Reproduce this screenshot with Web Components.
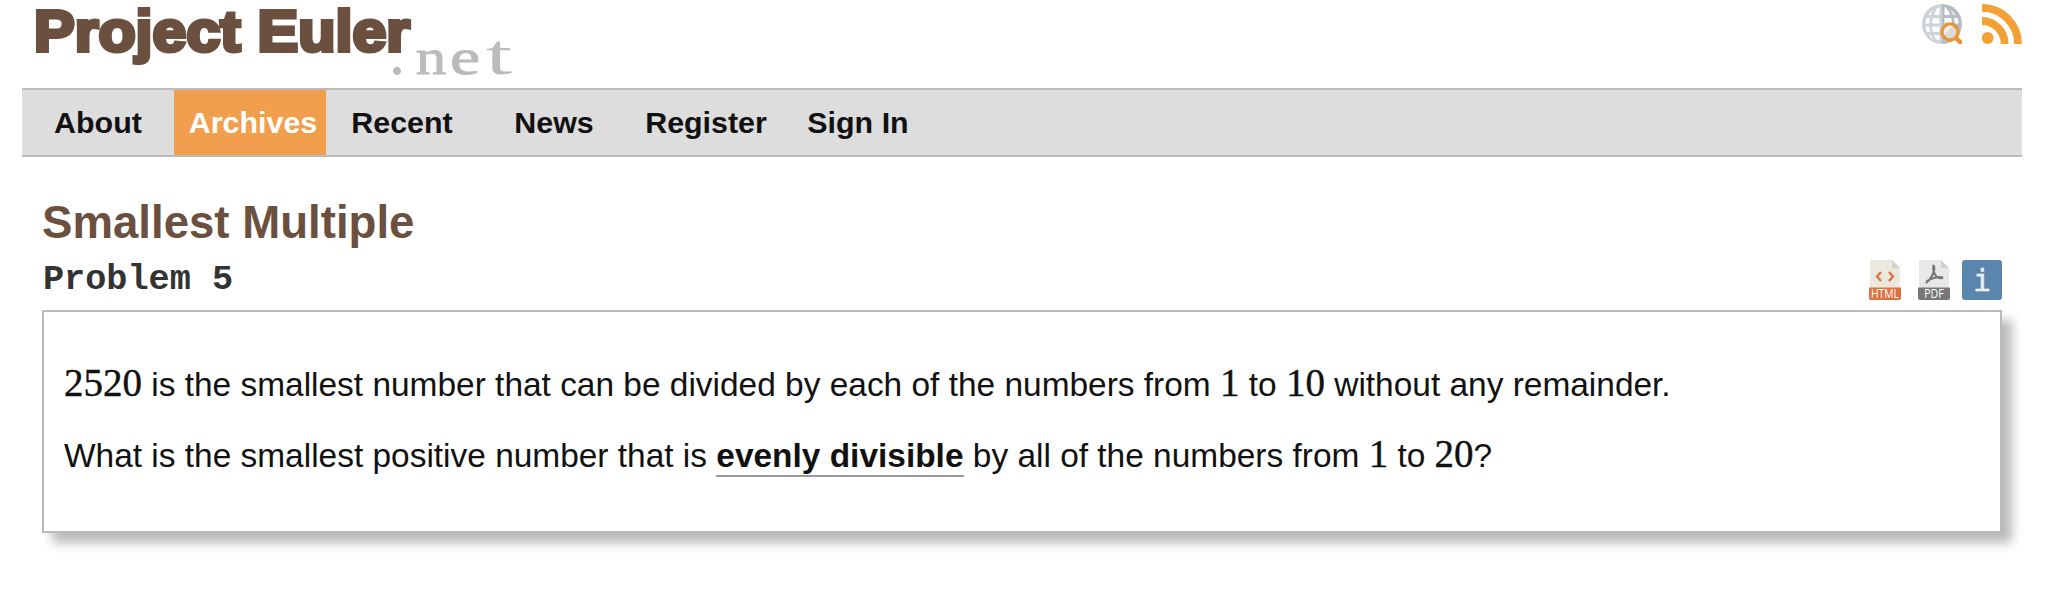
<!DOCTYPE html>
<html lang="en">
<head>
<meta charset="utf-8">
<title>Smallest Multiple - Project Euler</title>
<style>
  body { margin: 0; background: #fff; color: #111; font-family: "Liberation Sans", Arial, sans-serif; }
</style>
</head>
<body>
<euler-page>
  <euler-header slot="header"></euler-header>
  <euler-nav slot="nav">
    <nav-item>About</nav-item>
    <nav-item active>Archives</nav-item>
    <nav-item>Recent</nav-item>
    <nav-item>News</nav-item>
    <nav-item>Register</nav-item>
    <nav-item>Sign In</nav-item>
  </euler-nav>
  <problem-heading>
    <span slot="title">Smallest Multiple</span>
    <span slot="number">Problem 5</span>
  </problem-heading>
  <problem-content>
    <problem-line><math-num>2520</math-num> is the smallest number that can be divided by each of the numbers from <math-num>1</math-num> to <math-num>10</math-num> without any remainder.</problem-line>
    <problem-line>What is the smallest positive number that is <tip-term>evenly divisible</tip-term> by all of the numbers from <math-num>1</math-num> to <math-num>20</math-num>?</problem-line>
  </problem-content>
</euler-page>
<script>
const define = (name, html) => customElements.define(name, class extends HTMLElement {
  constructor() {
    super();
    const t = document.createElement('template');
    t.innerHTML = html;
    this.attachShadow({ mode: 'open' }).append(t.content.cloneNode(true));
  }
});

define('euler-page', `
  <style>
    :host { display: block; box-sizing: border-box; width: 2072px; height: 614px; overflow: hidden; padding: 0 50px 0 22px; }
    main { padding: 0 20px; }
  </style>
  <slot name="header"></slot><slot name="nav"></slot><main><slot></slot></main>`);

define('euler-header', `
  <style>
    :host { display: flex; justify-content: space-between; height: 88px; }
    site-logo { margin-left: 12px; }
    .icons { display: flex; gap: 20px; padding-top: 4px; }
  </style>
  <site-logo></site-logo>
  <div class="icons"><globe-icon></globe-icon><rss-icon></rss-icon></div>`);

define('site-logo', `
  <style>
    :host { display: flex; white-space: nowrap; }
    .name { font-weight: 700; font-size: 58px; line-height: 62px; color: #6b4f3f; -webkit-text-stroke: 4px #6b4f3f; width: 381px; transform: scaleX(1.051); transform-origin: left; }
    .net { display: flex; font-family: "Liberation Serif", serif; font-size: 50px; line-height: 56px; padding-top: 29px; margin-left: -35px; color: #bbb; -webkit-text-stroke: .8px #bbb; }
    .net span { width: 34px; text-align: center; transform: scaleX(1.22); }
    .net span:first-child { transform: scale(1.2); transform-origin: 50% 78%; }
    .net span:nth-child(3) { transform: scaleX(1.36); }
    .net span:last-child { -webkit-text-stroke-width: 0; transform: scale(1.9, 1.12); transform-origin: 50% 78%; }
  </style>
  <div class="name">Project Euler</div><div class="net"><span>.</span><span>n</span><span>e</span><span>t</span></div>`);

define('globe-icon', `
  <style>:host { display: block; width: 40px; height: 40px; } svg { display: block; }</style>
  <svg width="40" height="40" viewBox="0 0 40 40" fill="none">
    <defs><linearGradient id="g"><stop offset=".5" stop-color="#ccd3d6"/><stop offset=".5" stop-color="#b4bec2"/></linearGradient></defs>
    <circle cx="20" cy="20" r="20" fill="url(#g)"/>
    <g fill="#fff">
      <path d="M17.500 3v8h-5.500c1-4 3-7 5.500-8M22.500 3v8H28c-1-4-3-7-5.500-8M11 14h6.500v5.500h-7.500q0-3 1-5.500M22.500 14H29q1 2 1 5.500h-7.500zM10 22.500h7.500v5.500h-6.500q-1-2-1-5.500M22.500 22.500H29V28h-6.500zM12 31h5.500v5.500c-3 0-5-3-5.500-5.500M22.500 31H28c-1 3-3 5.500-5.500 5.500z"/>
      <path d="M12 5.500Q9.500 8 8.500 11H6.500q2-3.500 5.500-5.500M28 5.500q2.500 2.500 3.500 5.500h2q-2-3.500-5.500-5.500M4.500 14h3.500l-.8 5.500H3.500q0-3 1-5.500M32 14h3.500q1 2.500 1 5.500h-3.700zM3.500 22.500h3.700L8 28H5q-1.500-2.500-1.500-5.500M6.800 31h2q1 2.500 3 4.500-3-1.500-5-4.500"/>
    </g>
    <path d="m33.500 33.500 7 7" stroke="#e99432" stroke-width="4.500"/>
    <circle cx="28" cy="28" r="8" fill="#dcdcdc" stroke="#e99432" stroke-width="3.400"/>
    <path d="M22.500 31a6.500 6.500 0 0 1 8-9z" fill="#f1f1f1"/>
  </svg>`);

define('rss-icon', `
  <style>:host { display: block; width: 40px; height: 40px; } svg { display: block; }</style>
  <svg width="40" height="40" viewBox="0 0 40 40" fill="none" stroke="#f3a135" stroke-width="7.800">
    <circle cx="5.700" cy="34" r="5.900" fill="#f3a135" stroke="none"/>
    <path d="M0 17a22.700 23 0 0 1 22.700 23M0 3.900A36 36.100 0 0 1 36 40"/>
  </svg>`);

define('euler-nav', `
  <style>:host { display: flex; box-sizing: border-box; height: 69px; background: #ddd; border: solid #bbb; border-width: 2px 0; }</style>
  <slot></slot>`);

define('nav-item', `
  <style>
    :host { display: block; width: 152px; text-align: center; font-weight: 700; font-size: 30.4px; line-height: 65px; color: #111; }
    :host([active]) { background: #f19f4d; color: #fff; box-sizing: border-box; padding-left: 6px; }
  </style>
  <slot></slot>`);

define('problem-heading', `
  <style>
    :host { display: grid; grid-template-columns: 1fr auto; height: 153px; box-sizing: border-box; padding-top: 39px; white-space: nowrap; align-content: start; }
    h2 { grid-column: 1 / 3; margin: 0; font-size: 45.6px; line-height: 54px; height: 64px; color: #6b4f3f; }
    h3 { margin: 0 0 0 1px; font: 700 35.2px/40px "Liberation Mono", monospace; color: #333; }
    .icons { display: flex; }
    pdf-icon { margin: 0 12px 0 17px; }
  </style>
  <h2><slot name="title"></slot></h2>
  <h3><slot name="number"></slot></h3>
  <div class="icons"><html-icon></html-icon><pdf-icon></pdf-icon><info-icon></info-icon></div>`);

define('html-icon', `
  <style>:host { display: block; width: 32px; height: 40px; } svg { display: block; overflow: visible; }</style>
  <svg width="32" height="40" viewBox="0 0 32 40">
    <path d="M1 1q0-1 1-1h21l8 8v20H1z" fill="#e9e9e0"/><path d="M23 0v8h8z" fill="#d2d2c5"/>
    <path d="M0 27.500h32V38q0 2-2 2H2q-2 0-2-2z" fill="#e1703f"/>
    <path d="m12 12-4 4.500 4 4.500m8-9 4 4.500-4 4.500" fill="none" stroke="#e1703f" stroke-width="2.300"/>
    <text x="16" y="38" text-anchor="middle" textLength="28" lengthAdjust="spacingAndGlyphs" font-family="Open Sans" font-size="12" fill="#fff">HTML</text>
  </svg>`);

define('pdf-icon', `
  <style>:host { display: block; width: 32px; height: 40px; } svg { display: block; overflow: visible; }</style>
  <svg width="32" height="40" viewBox="0 0 32 40">
    <path d="M1 1q0-1 1-1h21l8 8v20H1z" fill="#e8e8e8"/><path d="M23 0v8h8z" fill="#cfcfcf"/>
    <path d="M0 27.500h32V38q0 2-2 2H2q-2 0-2-2z" fill="#777"/>
    <path d="M15.500 5.500c-1 4 1 9 3 11q2 2 6 1.500M15.500 5.500c2 2 0 8-2 11q-3 5-5 6M9 21q6-4 15-4" fill="none" stroke="#777" stroke-width="2.100" stroke-linecap="round"/>
    <text x="16" y="38" text-anchor="middle" textLength="19.500" lengthAdjust="spacingAndGlyphs" font-family="Open Sans" font-size="12" fill="#fff">PDF</text>
  </svg>`);

define('info-icon', `
  <style>
    :host { display: block; width: 40px; height: 40px; border-radius: 3px; background: #5a86ad; color: #eee; font: 30px/41px "DejaVu Sans Mono", monospace; text-align: center; -webkit-text-stroke: .4px #eee; }
  </style>i`);

define('problem-content', `
  <style>
    :host { display: block; box-sizing: border-box; height: 223px; padding: 53px 20px 0; background: #fff; border: 2px solid #bbb; box-shadow: 10px 10px 10px #bbb; }
  </style>
  <slot></slot>`);

define('problem-line', `
  <style>:host { display: block; height: 40px; margin-bottom: 31px; font-size: 33.45px; line-height: 40px; white-space: nowrap; }</style>
  <slot></slot>`);

define('math-num', `
  <style>:host { font: 39px/0 "Liberation Serif", serif; -webkit-text-stroke: .4px #111; }</style><slot></slot>`);

define('tip-term', `
  <style>:host { display: inline-block; box-sizing: border-box; height: 41px; font-weight: 700; border-bottom: 2px solid #999; }</style><slot></slot>`);
</script>
</body>
</html>
